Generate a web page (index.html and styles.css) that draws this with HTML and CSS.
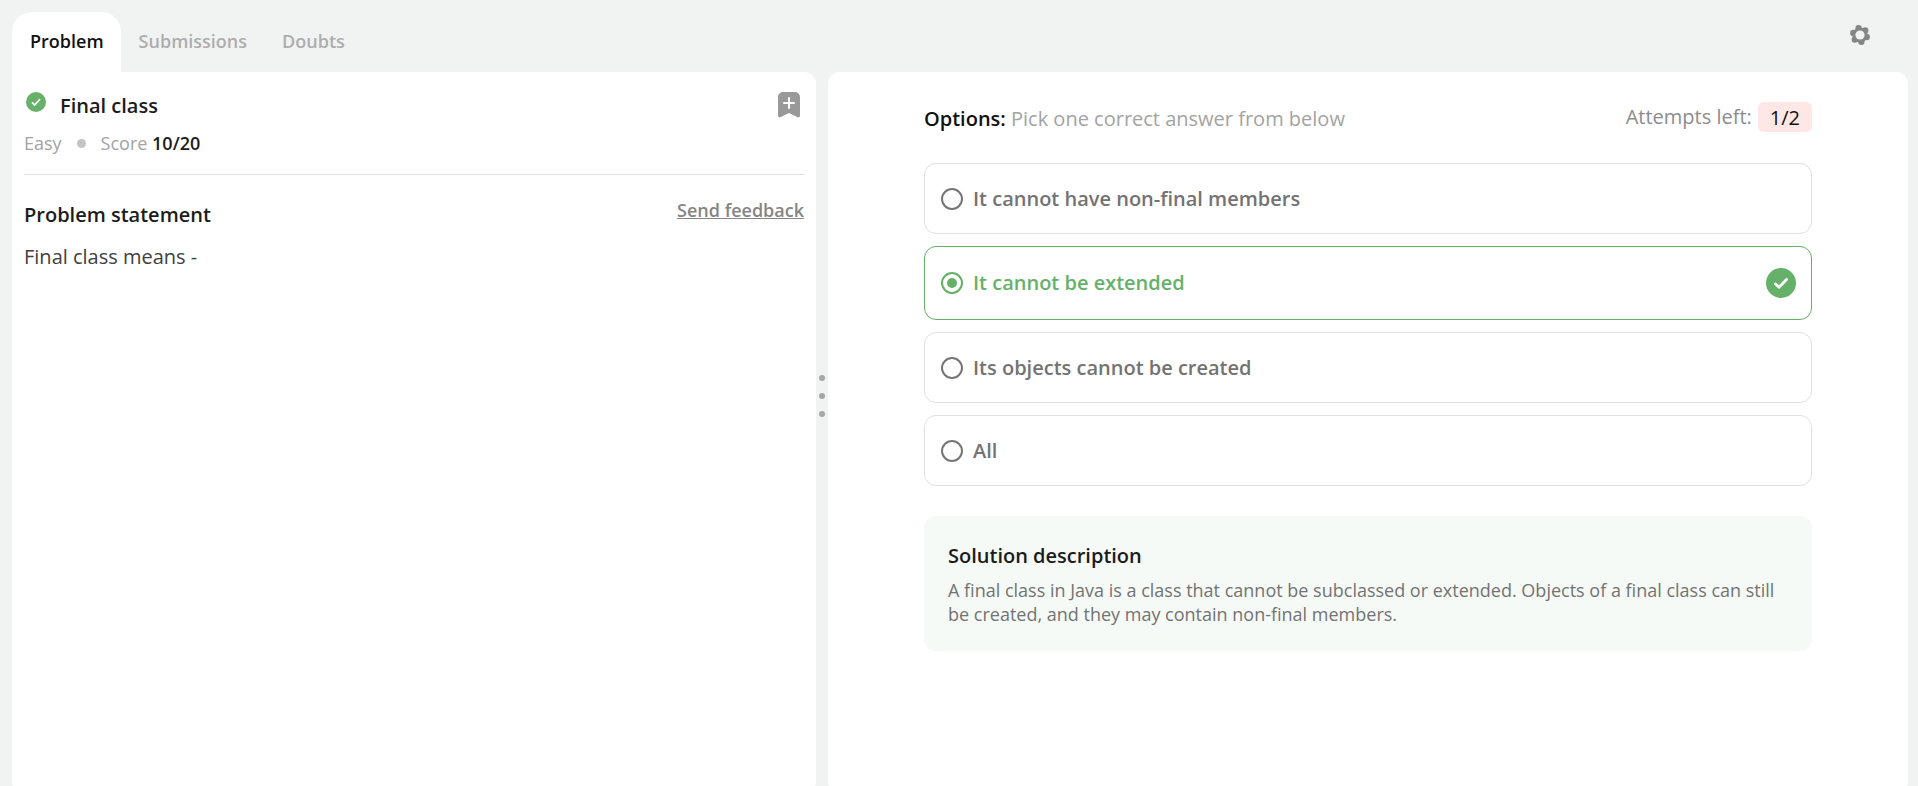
FILE: index.html
```html
<!DOCTYPE html>
<html lang="en">
<head>
<meta charset="utf-8">
<title>Final class</title>
<link rel="stylesheet" href="styles.css">
</head>
<body>
<div class="page">
  <header class="topbar">
    <nav class="tabs">
      <button class="tab tab-active" type="button">Problem</button>
      <button class="tab" type="button">Submissions</button>
      <button class="tab" type="button">Doubts</button>
    </nav>
    <button class="icon-button settings" type="button" aria-label="Settings">
      <svg width="20" height="20" viewBox="0 0 20 20"><g fill="#858585"><circle cx="8.600" cy="3.200" r="3.200"/><circle cx="15.200" cy="5.400" r="3.200"/><circle cx="16.700" cy="12" r="3.200"/><circle cx="11.400" cy="16.800" r="3.200"/><circle cx="4.800" cy="14.600" r="3.200"/><circle cx="3.300" cy="8" r="3.200"/><circle cx="10" cy="10" r="7.600"/></g><circle cx="10" cy="10" r="4.600" fill="#f1f3f2"/></svg>
    </button>
  </header>
  <main class="panels">
    <section class="panel problem">
      <div class="problem-head">
        <div class="title-row">
          <svg class="solved" width="20" height="20" viewBox="0 0 20 20"><circle cx="10" cy="10" r="10" fill="#66b16a"/><path d="M6 10.400 8.600 13 14 7.200" fill="none" stroke="#fff" stroke-width="1.800"/></svg>
          <h1 class="title">Final class</h1>
          <button class="icon-button" type="button" aria-label="Bookmark">
            <svg width="22" height="26" viewBox="0 0 22 26"><path d="M5 0h12a5 5 0 0 1 5 5v18.500c0 1.700-1.600 2.400-2.900 1.600L11 21l-8.100 4.100C1.600 25.900 0 25.200 0 23.500V5a5 5 0 0 1 5-5z" fill="#999"/><path d="M11 6v10M6 11h10" fill="none" stroke="#fff" stroke-width="2" stroke-linecap="round"/></svg>
          </button>
        </div>
        <div class="meta"><span>Easy</span><span class="dot"></span><span>Score <b class="score">10/20</b></span></div>
      </div>
      <div class="statement-head">
        <h2 class="heading">Problem statement</h2>
        <a class="feedback" href="#">Send feedback</a>
      </div>
      <p class="statement">Final class means -</p>
    </section>
    <div class="resizer"><span class="grip"></span><span class="grip"></span><span class="grip"></span></div>
    <section class="panel answers">
      <div class="answers-head">
        <p class="prompt"><b class="prompt-label">Options:</b> Pick one correct answer from below</p>
        <p class="attempts">Attempts left: <span class="badge">1/2</span></p>
      </div>
      <form class="options">
        <label class="option"><input class="radio" type="radio" name="answer"><span>It cannot have non-final members</span></label>
        <label class="option option-correct"><input class="radio" type="radio" name="answer" checked><span>It cannot be extended</span>
          <svg class="option-check" width="30" height="30" viewBox="0 0 30 30"><circle cx="15" cy="15" r="15" fill="#66b16a"/><path d="M9.500 16 13 19.200 20.500 11.500" fill="none" stroke="#fff" stroke-width="2.800" stroke-linecap="round" stroke-linejoin="round"/></svg>
        </label>
        <label class="option"><input class="radio" type="radio" name="answer"><span>Its objects cannot be created</span></label>
        <label class="option"><input class="radio" type="radio" name="answer"><span>All</span></label>
      </form>
      <section class="solution">
        <h2 class="heading">Solution description</h2>
        <p class="solution-text">A final class in Java is a class that cannot be subclassed or extended. Objects of a final class can still be created, and they may contain non-final members.</p>
      </section>
    </section>
  </main>
</div>
</body>
</html>
```
FILE: styles.css
```css
* { box-sizing: border-box; }
body {
  margin: 0;
  background: #f1f3f2;
  color: #1c1c1c;
  font-family: "Open Sans", "Noto Sans", sans-serif;
  font-size: 20px;
  line-height: 24px;
  overflow: hidden;
}
h1, h2, p { margin: 0; font-size: 20px; }
button { font-family: inherit; border: 0; background: none; padding: 0; cursor: pointer; }
.page {
  display: flex;
  flex-direction: column;
  height: calc(100vh + 8px);
  padding: 12px 10px 0 12px;
}
.topbar { display: flex; justify-content: space-between; align-items: flex-start; }
.tabs { display: flex; }
.tab {
  height: 60px;
  padding: 0 17px 2px 18px;
  border-radius: 20px 20px 0 0;
  font-size: 18px;
  font-weight: 600;
  color: #adadad;
}
.tab-active { background: #fff; color: #111; }
.icon-button { display: flex; }
.settings { margin: 13px 38px 0 0; }
.panels { display: grid; grid-template-columns: 67fr 12px 90fr; flex: 1; }
.panel { background: #fff; border-radius: 12px; min-width: 0; }
.problem { padding: 20px 12px; border-top-left-radius: 0; }
.problem-head { border-bottom: 1px solid #e0e0e0; padding-bottom: 19px; }
.title-row { display: flex; align-items: flex-start; padding: 0 4px 0 2px; }
.solved { margin-right: 14px; }
.title { flex: 1; font-weight: 600; padding-top: 2px; }
.meta {
  display: flex;
  align-items: center;
  gap: 15px;
  margin-top: 13px;
  font-size: 18px;
  color: #a3a3a3;
}
.score { font-weight: 600; color: #1c1c1c; }
.dot { width: 9px; height: 9px; border-radius: 50%; background: #c4c4c4; }
.statement-head { display: flex; justify-content: space-between; margin-top: 23px; }
.heading { font-weight: 600; }
.statement-head .heading { padding-top: 5px; }
.feedback { font-size: 18px; font-weight: 600; color: #858585; }
.statement { margin-top: 18px; color: #404040; }
.resizer {
  display: flex;
  flex-direction: column;
  align-items: center;
  gap: 12px;
  padding-top: 303px;
}
.grip { width: 6px; height: 6px; border-radius: 50%; background: #a6a6a6; }
.answers { padding: 30px 96px; }
.answers-head { display: flex; justify-content: space-between; align-items: center; }
.prompt { padding-top: 4px; color: #a3a3a3; }
.prompt-label { font-weight: 600; color: #111; }
.attempts { display: flex; align-items: center; gap: 6px; color: #8c8c8c; }
.badge { padding: 4px 12px 2px; border-radius: 6px; background: #ffe7e5; color: #111; }
.options { display: flex; flex-direction: column; gap: 12px; margin-top: 31px; }
.option {
  display: flex;
  align-items: center;
  gap: 10px;
  min-height: 71px;
  padding: 0 15px 0 16px;
  border: 1px solid #e0e0e0;
  border-radius: 12px;
  font-weight: 600;
  color: #737373;
}
.option-correct { min-height: 74px; border-color: #66b16a; color: #66b16a; }
.option-check { margin-left: auto; }
.radio {
  appearance: none;
  display: grid;
  place-items: center;
  width: 22px;
  height: 22px;
  margin: 0;
  border: 2px solid #757575;
  border-radius: 50%;
}
.radio:checked { border-color: #66b16a; }
.radio:checked::before { content: ""; width: 10px; height: 10px; border-radius: 50%; background: #66b16a; }
.solution { margin-top: 30px; padding: 28px 24px 25px; border-radius: 12px; background: #f5faf6; }
.solution-text { margin-top: 10px; font-size: 18px; color: #737373; }
```
